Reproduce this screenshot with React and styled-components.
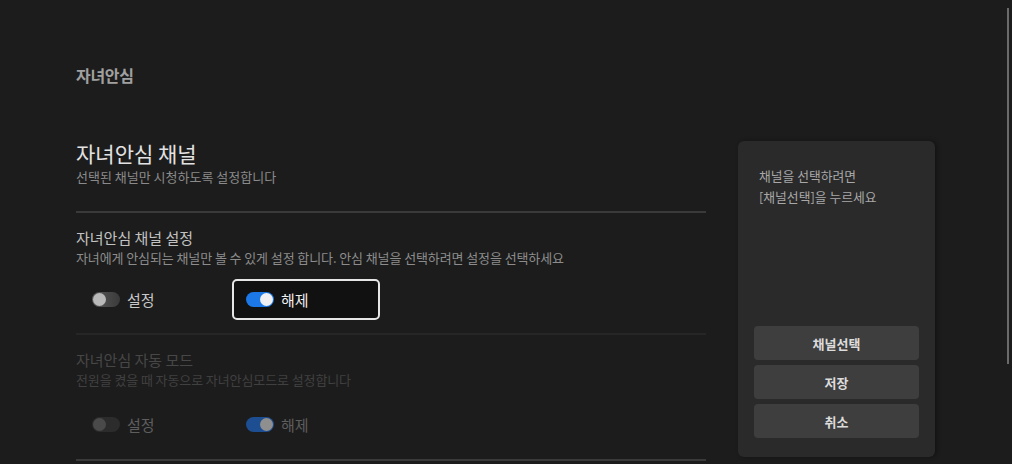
import React from 'react';
import styled, { createGlobalStyle } from 'styled-components';

const GlobalStyle = createGlobalStyle`
  html, body {
    margin: 0;
    padding: 0;
    background: #1c1c1c;
  }
  body {
    font-family: "Noto Sans CJK KR", "Noto Sans", sans-serif;
  }
`;

const Page = styled.div`
  position: relative;
  width: 1012px;
  height: 464px;
  box-sizing: border-box;
  padding: 65px 0 0 76px;
  overflow: hidden;
  background: #1c1c1c;
`;

const PageTitle = styled.div`
  font-size: 16px;
  line-height: 20px;
  font-weight: 700;
  color: #a0a0a0;
  letter-spacing: -0.3px;
`;

const Layout = styled.div`
  display: flex;
  align-items: flex-start;
  gap: 32px;
  margin-top: 56px;
`;

const Main = styled.div`
  width: 630px;
  display: flex;
  flex-direction: column;
`;

const Heading = styled.div`
  font-size: 21px;
  line-height: 24px;
  color: #e2e2e2;
`;

const SubHeading = styled.div`
  margin-top: 4px;
  font-size: 13px;
  line-height: 16px;
  color: #8a8a8a;
`;

const Divider = styled.div`
  height: 2px;
  background: ${p => p.$faint ? '#262626' : '#3a3a3a'};
  margin-top: ${p => p.$gap}px;
`;

const Section = styled.div`
  display: flex;
  flex-direction: column;
  padding-top: 15px;
`;

const SectionTitle = styled.div`
  font-size: 15px;
  line-height: 20px;
  color: ${p => p.$dim ? '#474747' : '#c2c2c2'};
`;

const SectionDesc = styled.div`
  margin-top: 2px;
  font-size: 13px;
  line-height: 16px;
  letter-spacing: -0.1px;
  color: ${p => p.$dim ? '#404040' : '#8c8c8c'};
`;

const OptionRow = styled.div`
  display: flex;
  gap: 6px;
  margin-top: ${p => p.$gap}px;
  padding-left: 2px;
`;

const Option = styled.div`
  box-sizing: border-box;
  width: 148px;
  height: 41px;
  display: flex;
  align-items: center;
  gap: 7px;
  padding-left: 12px;
  border: 2px solid ${p => p.$focused ? '#e6e6e6' : 'transparent'};
  border-radius: 5px;
  background: ${p => p.$focused ? '#111111' : 'transparent'};
`;

const Track = styled.span`
  position: relative;
  width: 28px;
  height: 15px;
  border-radius: 8px;
  flex-shrink: 0;
  background: ${p => {
    if (p.$on) return p.$dim ? '#1d4e91' : '#1b78e6';
    return p.$dim ? '#2c2c2c' : 'linear-gradient(90deg, #5a5a5a, #3a3a3a)';
  }};
`;

const Knob = styled.span`
  position: absolute;
  top: 1px;
  left: ${p => p.$on ? '14px' : '1px'};
  width: 13px;
  height: 13px;
  border-radius: 50%;
  background: ${p => {
    if (p.$on) return p.$dim ? '#8f8f8f' : '#f0f0f4';
    return p.$dim ? '#4a4a4a' : '#b9b9b9';
  }};
`;

const OptionLabel = styled.span`
  font-size: 15px;
  line-height: 18px;
  color: ${p => p.$dim ? '#5e5e5e' : p.$focused ? '#f0f0f0' : '#c8c8c8'};
`;

const Side = styled.div`
  box-sizing: border-box;
  width: 197px;
  height: 316px;
  display: flex;
  flex-direction: column;
  justify-content: space-between;
  padding: 24px 16px 19px 16px;
  background: #2a2a2a;
  border-radius: 6px;
  box-shadow: 2px 0 4px rgba(0, 0, 0, 0.35);
`;

const SideHint = styled.div`
  padding-left: 5px;
  font-size: 12.8px;
  line-height: 21px;
  color: #a8a8a8;
`;

const ButtonStack = styled.div`
  display: flex;
  flex-direction: column;
  gap: 5px;
`;

const ActionButton = styled.button`
  height: 34px;
  border: none;
  border-radius: 4px;
  background: #3e3e3e;
  color: #dcdcdc;
  font-family: inherit;
  font-size: 13px;
  font-weight: 700;
  cursor: pointer;
`;

const Scrollbar = styled.div`
  position: absolute;
  top: 8px;
  right: 3px;
  width: 2px;
  height: 356px;
  background: #6a6a6a;
`;

const Toggle = ({ on, dim }) => (
  <Track $on={on} $dim={dim}>
    <Knob $on={on} $dim={dim} />
  </Track>
);

const ToggleOption = ({ label, on, focused, dim }) => (
  <Option $focused={focused}>
    <Toggle on={on} dim={dim} />
    <OptionLabel $dim={dim} $focused={focused}>{label}</OptionLabel>
  </Option>
);

const SettingSection = ({ title, desc, dim, focusedIndex, rowGap }) => (
  <Section>
    <SectionTitle $dim={dim}>{title}</SectionTitle>
    <SectionDesc $dim={dim}>{desc}</SectionDesc>
    <OptionRow $gap={rowGap}>
      <ToggleOption label="설정" on={false} dim={dim} focused={focusedIndex === 0} />
      <ToggleOption label="해제" on dim={dim} focused={focusedIndex === 1} />
    </OptionRow>
  </Section>
);

export default function App() {
  return (
    <Page>
      <GlobalStyle />
      <PageTitle>자녀안심</PageTitle>
      <Layout>
        <Main>
          <Heading>자녀안심 채널</Heading>
          <SubHeading>선택된 채널만 시청하도록 설정합니다</SubHeading>
          <Divider $gap={26} />
          <SettingSection
            title="자녀안심 채널 설정"
            desc="자녀에게 안심되는 채널만 볼 수 있게 설정 합니다. 안심 채널을 선택하려면 설정을 선택하세요"
            focusedIndex={1}
            rowGap={13}
          />
          <Divider $gap={13} $faint />
          <SettingSection
            title="자녀안심 자동 모드"
            desc="전원을 켰을 때 자동으로 자녀안심모드로 설정합니다"
            rowGap={16}
            dim
          />
          <Divider $gap={14} />
        </Main>
        <Side>
          <SideHint>
            채널을 선택하려면
            <br />
            [채널선택]을 누르세요
          </SideHint>
          <ButtonStack>
            <ActionButton>채널선택</ActionButton>
            <ActionButton>저장</ActionButton>
            <ActionButton>취소</ActionButton>
          </ButtonStack>
        </Side>
      </Layout>
      <Scrollbar />
    </Page>
  );
}
